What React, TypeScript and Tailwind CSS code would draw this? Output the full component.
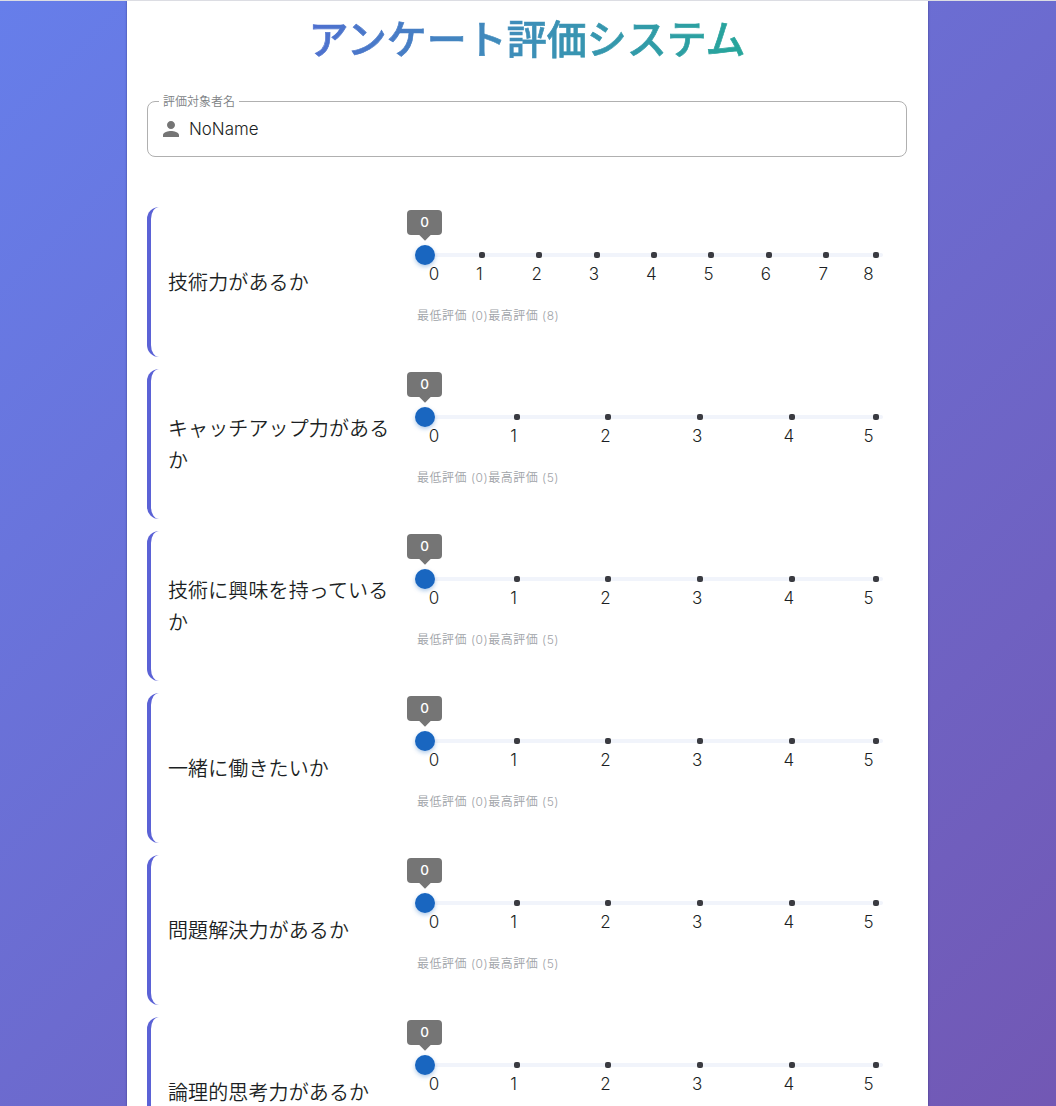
import React from "react";

const QUESTIONS = [
  { text: "技術力があるか", max: 8 },
  { text: "キャッチアップ力があるか", max: 5 },
  { text: "技術に興味を持っているか", max: 5 },
  { text: "一緒に働きたいか", max: 5 },
  { text: "問題解決力があるか", max: 5 },
  { text: "論理的思考力があるか", max: 5 },
];

const TRACK = 458.5;

function Slider({ max }: { max: number }) {
  const marks = Array.from({ length: max + 1 }, (_, i) => i);
  return (
    <div className="relative ml-[10px] h-1 w-[459px] rounded-full bg-[#f1f4fb]">
      {marks.slice(1).map((m) => {
        const x = m === max ? TRACK - 7 : (TRACK * m) / max;
        return (
          <span
            key={m}
            className="absolute -top-px size-1.5 -translate-x-1/2 rounded-[2px] bg-[#3a3b41]"
            style={{ left: x + 0.8 }}
          />
        );
      })}
      {marks.map((m) => {
        const x = m === 0 ? 10 : m === max ? TRACK - 14 : (TRACK * m) / max - 2;
        return (
          <span
            key={m}
            className="absolute top-[9px] -translate-x-1/2 font-['Inter'] text-[17px] leading-6 font-light text-[#1c1f24]"
            style={{ left: x }}
          >
            {m}
          </span>
        );
      })}
      <span className="absolute -top-2 -left-[9px] size-5 rounded-full bg-[#1966c0] shadow-[0_2px_4px_rgba(25,102,192,0.35)]" />
      <div className="absolute -top-[43px] -left-[17px] flex h-[25px] w-[35px] items-center justify-center rounded-[4px] bg-[#757575] text-white">
        <span className="inline-block font-['Inter'] text-[13.5px] font-medium">0</span>
        <span className="absolute -bottom-1 left-1/2 size-2 -translate-x-1/2 rotate-45 bg-[#757575]" />
      </div>
    </div>
  );
}

export default function App() {
  return (
    <div className="h-[1106px] overflow-hidden border-t border-[#dcdde3] bg-[linear-gradient(135deg,#667eea_0%,#764ba2_100%)] bg-[length:100%_1826px] pr-px font-['Noto_Sans_CJK_JP',sans-serif]">
      <main className="mx-auto h-full w-[801px] bg-white pr-[21px] pl-5 shadow-[0_0_2px_rgba(30,30,90,0.6)]">
        <h1 className="pt-3 text-center text-[40px] leading-[48px] font-medium">
          <span className="inline-block bg-[linear-gradient(100deg,#4f6fd0,#3d8fb8_50%,#26a69a)] bg-clip-text text-transparent [-webkit-text-stroke:0.7px_transparent]">
            アンケート評価システム
          </span>
        </h1>
        <fieldset className="mt-[33px] h-[63px] rounded-lg border border-[#b0b0b0] px-[11px]">
          <legend className="h-[15px] px-1 text-xs leading-[13px] font-[350] text-[#7c7f84]">評価対象者名</legend>
          <div className="flex items-center pt-2">
            <svg viewBox="0 0 24 24" className="size-6 fill-[#757575]">
              <path d="M12 12c2.21 0 4-1.79 4-4s-1.79-4-4-4-4 1.79-4 4 1.79 4 4 4zm0 2c-2.67 0-8 1.34-8 4v2h16v-2c0-2.66-5.33-4-8-4z" />
            </svg>
            <span className="ml-1.5 font-['Inter'] text-[16.9px] leading-6 font-light text-[#1c1f24]">NoName</span>
          </div>
        </fieldset>
        <div className="mt-[50px] flex flex-col gap-3">
          {QUESTIONS.map((q) => (
            <section key={q.text} className="flex h-[150px] shrink-0 rounded-xl border-l-4 border-[#5b62d6]">
              <div className="flex w-[253px] items-center pl-[17px]">
                <p className="w-[224px] text-xl leading-8 font-[350] tracking-[0.12px] break-all text-[#1c1f24]">{q.text}</p>
              </div>
              <div className="ml-[10px] pt-[46px]">
                <Slider max={q.max} />
                <div className="mt-[50px] ml-[3px] flex font-['Inter','Noto_Sans_CJK_JP',sans-serif] text-xs leading-[18px] font-[350] tracking-[0.5px] text-[#a0a3a8]">
                  <span>最低評価 (0)</span>
                  <span>最高評価 ({q.max})</span>
                </div>
              </div>
            </section>
          ))}
        </div>
      </main>
    </div>
  );
}
